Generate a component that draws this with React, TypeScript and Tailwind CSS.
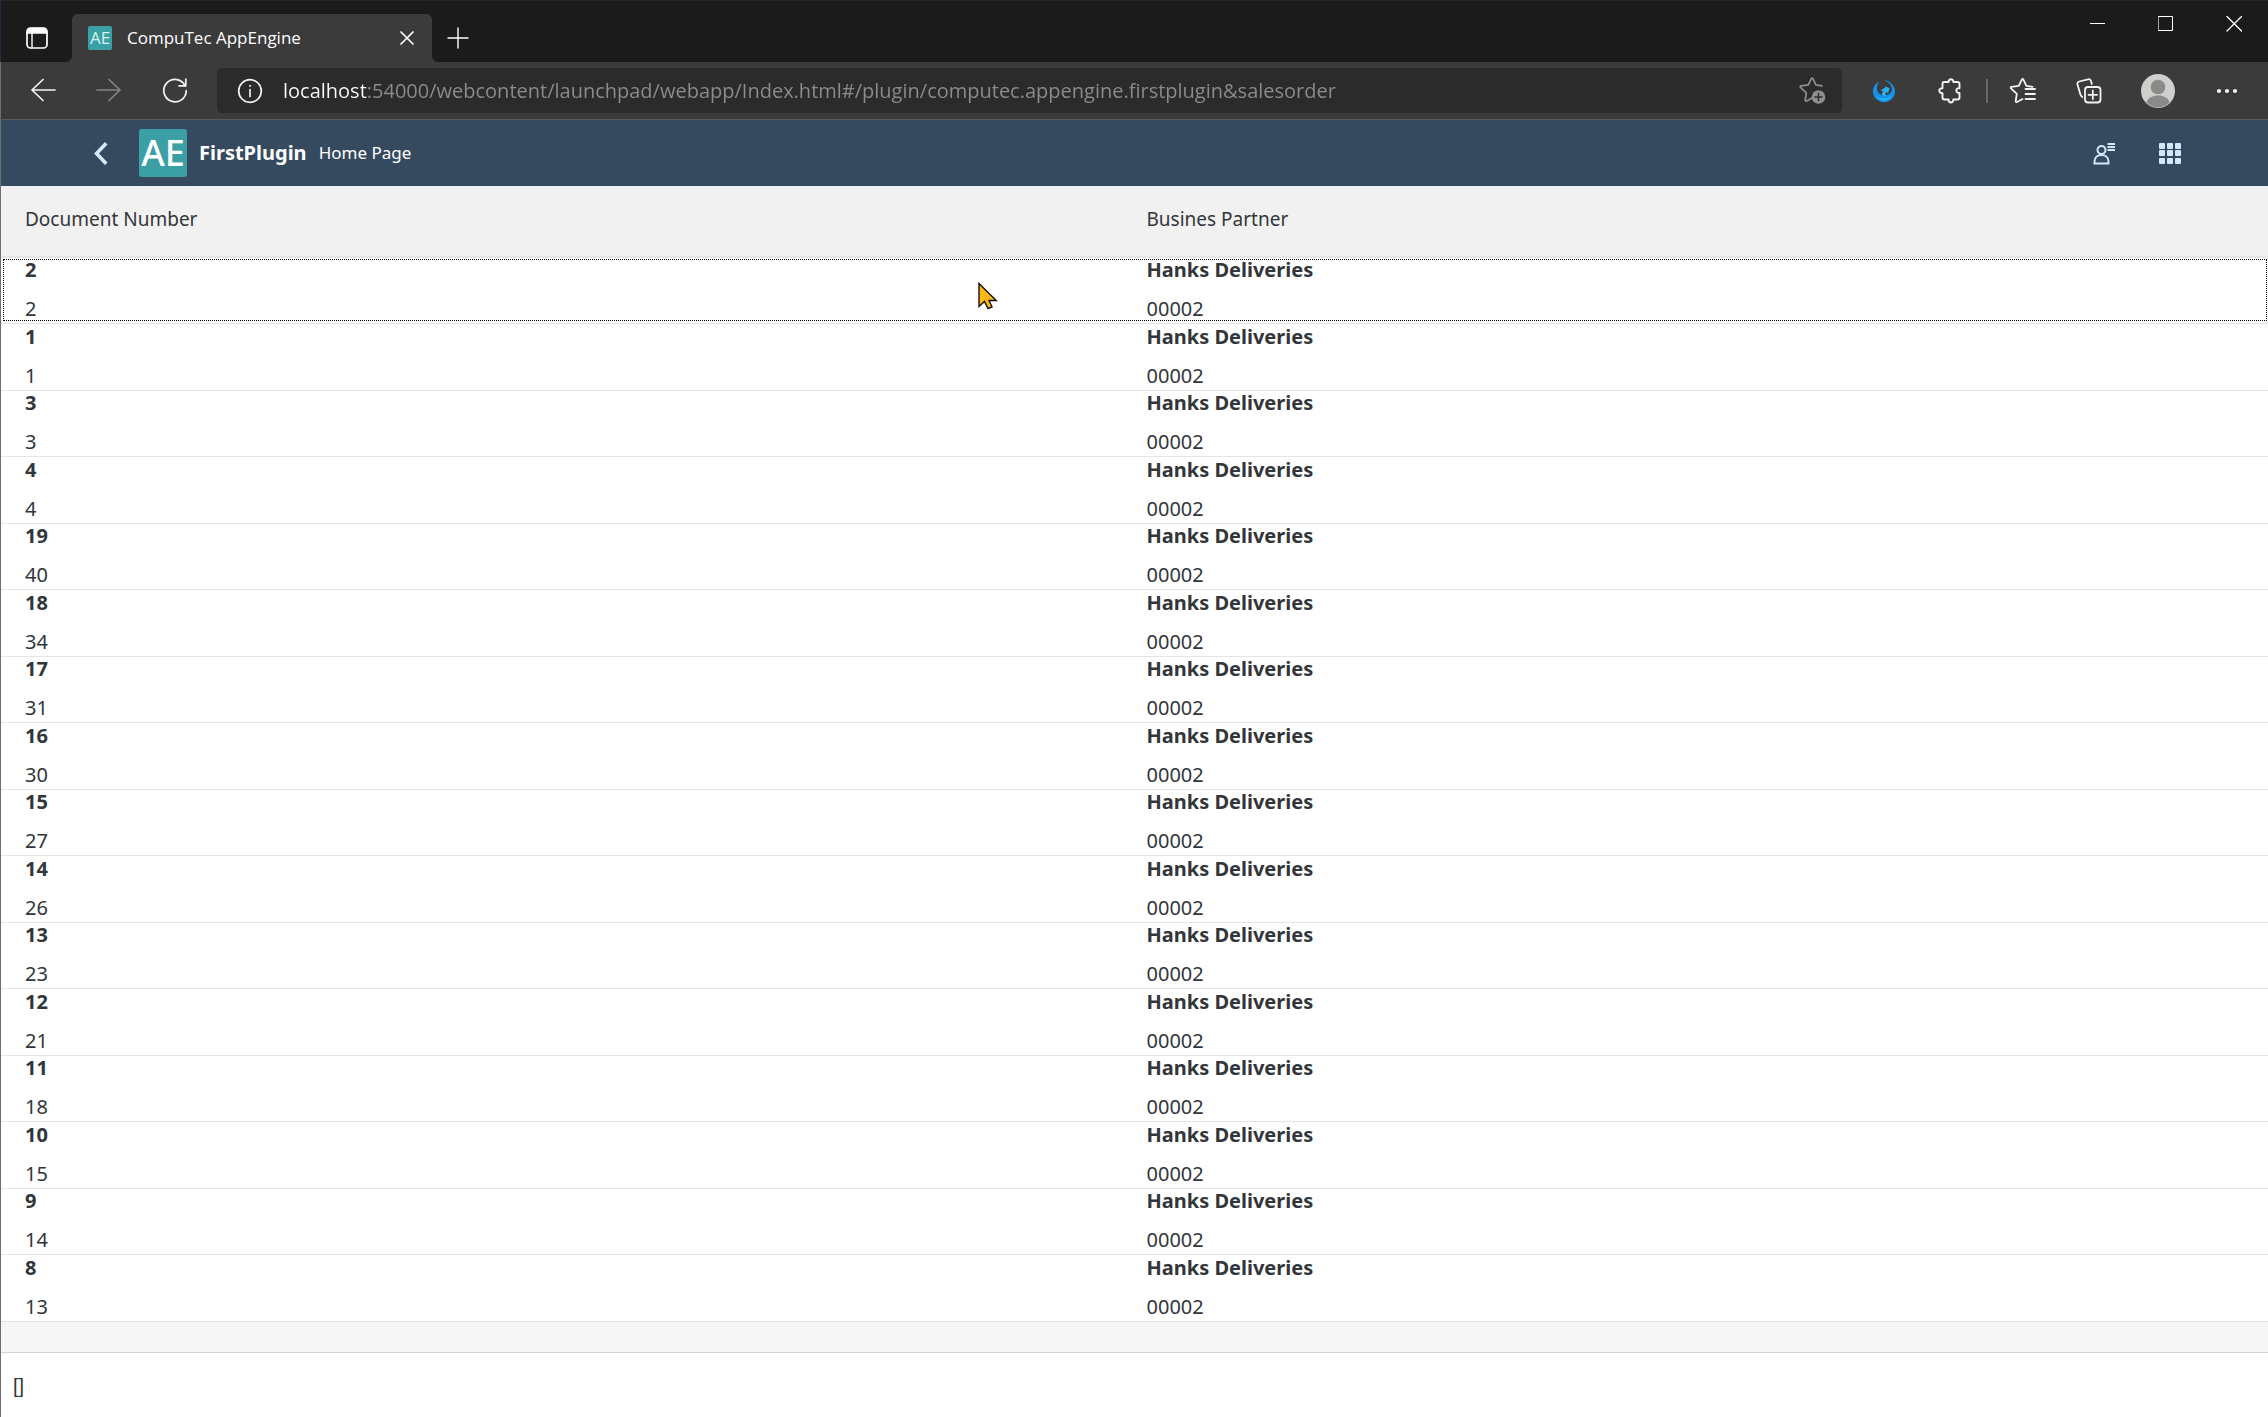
import React from 'react';

const rows: [string, string][] = [
  ['2', '2'], ['1', '1'], ['3', '3'], ['4', '4'], ['19', '40'], ['18', '34'], ['17', '31'], ['16', '30'],
  ['15', '27'], ['14', '26'], ['13', '23'], ['12', '21'], ['11', '18'], ['10', '15'], ['9', '14'], ['8', '13'],
];

const url =
  'localhost:54000/webcontent/launchpad/webapp/Index.html#/plugin/computec.appengine.firstplugin&salesorder';

const starPath = 'M18 25 L12.6 28 C11.9 28.4 11.1 27.8 11.2 27 L12.3 19.8 L6.5 14.4 C5.9 13.8 6.2 13 7 12.9 L14.3 11.9 L17.3 5.6 C17.7 4.8 18.5 4.8 18.9 5.6 L21.9 11.9 L28 12.8';

function Icon({ size = 24, stroke = 1.7, children }: { size?: number; stroke?: number; children: React.ReactNode }) {
  return (
    <svg width={size} height={size} viewBox={`0 0 ${size} ${size}`} fill="none" stroke="currentColor" strokeWidth={stroke} strokeLinecap="round" strokeLinejoin="round" aria-hidden="true">
      {children}
    </svg>
  );
}

function IconButton({ label, className, children }: { label: string; className: string; children: React.ReactNode }) {
  return (
    <button type="button" aria-label={label} className={`flex shrink-0 items-center justify-center ${className}`}>
      {children}
    </button>
  );
}

function TitleBar() {
  return (
    <div className="flex h-[62px] border-t border-l border-t-[#262626] border-l-[#1b3045] bg-[#1b1b1b] text-white">
      <IconButton label="Tab actions" className="w-[71px] pt-[12px]">
        <Icon>
          <rect x="2" y="2" width="20" height="20" rx="3.5" />
          <path d="M2.5 7V5.5a3 3 0 0 1 3-3h13a3 3 0 0 1 3 3V7z" fill="currentColor" />
          <path d="M7 7v15" strokeWidth="1.4" />
        </Icon>
      </IconButton>
      <div className="relative mt-[13px] flex w-[360px] items-center rounded-t-[6px] bg-[#3b3b3b] pr-[15px] pl-4">
        <svg className="absolute bottom-0 -left-[6px] text-[#3b3b3b]" width="6" height="6" aria-hidden="true"><path d="M6 0v6H0A6 6 0 0 0 6 0z" fill="currentColor" /></svg>
        <svg className="absolute -right-[6px] bottom-0 text-[#3b3b3b]" width="6" height="6" aria-hidden="true"><path d="M0 0v6h6A6 6 0 0 1 0 0z" fill="currentColor" /></svg>
        <span className="flex size-6 items-center justify-center rounded-[2px] bg-[#3aa0a5] text-[17px] leading-6 font-medium text-[#d8f2f2]">AE</span>
        <span className="ml-[15px] flex-1 text-[17px] leading-6">CompuTec AppEngine</span>
        <IconButton label="Close tab" className="size-5">
          <Icon size={20}><path d="M4 4l12 12M16 4L4 16" /></Icon>
        </IconButton>
      </div>
      <IconButton label="New tab" className="w-[51px] pt-[12px]">
        <Icon stroke={1.4}><path d="M12 2v20M2 12h20" /></Icon>
      </IconButton>
      <div className="ml-auto flex h-[45px]">
        <IconButton label="Minimize" className="w-[68px]">
          <Icon size={16} stroke={1}><path d="M0 7.5h15" strokeLinecap="butt" /></Icon>
        </IconButton>
        <IconButton label="Maximize" className="w-[68px]">
          <Icon size={16} stroke={1}><path d="M.5 .5h14v14h-14z" strokeLinejoin="miter" /></Icon>
        </IconButton>
        <IconButton label="Close window" className="w-[68px]">
          <Icon size={16} stroke={1.3}><path d="M1 .5l14.500 14.500M15.500 .5l-14.500 14.500" /></Icon>
        </IconButton>
      </div>
    </div>
  );
}

function Toolbar() {
  return (
    <div className="flex h-[58px] items-center border-b border-l border-b-[#5b5b5b] border-l-[#6f6f6f] bg-[#3b3b3b] text-[#f3f3f3]">
      <IconButton label="Back" className="ml-[9px] h-11 w-[66px]">
        <Icon size={26}><path d="M25 12H2M13 1.500L2 12l11 10.500" /></Icon>
      </IconButton>
      <IconButton label="Forward" className="h-11 w-[66px] text-[#858585]">
        <Icon size={26}><path d="M1 12h23M13 1.500L24 12 13 22.500" /></Icon>
      </IconButton>
      <IconButton label="Refresh" className="h-11 w-[66px]">
        <Icon size={26}>
          <path d="M23.200 8A11.200 11.200 0 1 0 24.200 12.500" />
          <path d="M23.800 1v6.800h-6.800" />
        </Icon>
      </IconButton>
      <div className="ml-[9px] flex h-[45px] flex-1 items-center rounded-[5px] bg-[#2b2b2b] pr-3 pl-5">
        <IconButton label="View site information" className="size-[26px]">
          <Icon size={26}>
            <circle cx="13" cy="13" r="11.300" />
            <path d="M13 11.500v7" />
            <circle cx="13" cy="7.800" r=".6" fill="currentColor" strokeWidth="1" />
          </Icon>
        </IconButton>
        <input
          aria-label="Address"
          defaultValue={url}
          className="ml-5 min-w-0 flex-1 bg-[linear-gradient(90deg,#ffffff_84px,#8c8c8c_84px)] bg-clip-text text-[20px] leading-7 text-transparent outline-none"
        />
        <IconButton label="Add to favorites" className="size-9 text-[#8f8f8f]">
          <Icon size={36}>
            <path d={starPath} />
            <circle cx="24.500" cy="24" r="6.800" fill="currentColor" stroke="none" />
            <path d="M24.500 20.500v7M21 24h7" stroke="#2b2b2b" strokeWidth="1.500" />
          </Icon>
        </IconButton>
      </div>
      <IconButton label="Browser extension" className="ml-[18px] size-12">
        <svg width="24" height="24" viewBox="0 0 24 24" aria-hidden="true">
          <path d="M7 2.500C3.600 4.400 1 8 1 12.500a11 10.700 0 0 0 22 0C23 7 18.500 2.600 12.500.5c3 3 7 4.500 7.400 9 .2 2.500-1.200 4.700-3.400 5.800-5.500 2.500-11.500.2-11.500-5.800 0-3 1-5 2-7z" fill="#1590e8" />
          <path d="M8.500 12.200c1-2 3.200-3 5-3.200L12.500 7l5 2.200-1.500 5.300-1.500-2c-1.200 1.500-1.500 3.500-.5 4.500-3 .5-4.500-.8-4.300-2.200.1-1 1.500-1.300 2-2.200-1-.8-2-.7-3.200-.4z" fill="#27b4f5" />
          <path d="M4 17c4 3.500 11 3.500 16-.5-2.500 6-12.500 7-16 .5z" fill="#27b4f5" />
        </svg>
      </IconButton>
      <IconButton label="Extensions" className="ml-[18px] size-12">
        <Icon size={26} stroke={1.9}>
          <path transform="translate(1 -.5)" d="M6 4.500h4.600c-.3-3.600 5-3.600 4.800 0h4.100a2 2 0 0 1 2 2v4.200c-4.200-.5-4.200 5.200 0 4.800v4.500a2 2 0 0 1-2 2h-4.200c.2 4-5 4-4.700 0H6.500a2 2 0 0 1-2-2v-4.300c-4.300.3-4.300-5.200 0-4.900V6a1.500 1.500 0 0 1 1.500-1.500z" />
        </Icon>
      </IconButton>
      <div className="ml-3 h-6 w-[2px] shrink-0 bg-[#686868]" />
      <IconButton label="Favorites" className="ml-[11px] size-12">
        <Icon size={36} stroke={1.8}>
          <path d={starPath} transform="translate(-.5 1)" />
          <path d="M20.500 16h9.500M20.500 21h9.500M20.500 26h9.500" />
        </Icon>
      </IconButton>
      <IconButton label="Collections" className="ml-[18px] size-12">
        <Icon size={26} stroke={1.8}>
          <rect x="9" y="9" width="15.500" height="15.500" rx="3" />
          <path d="M16.800 12.500v8.500M12.500 16.800h8.500" />
          <path d="M6.200 19C4.600 18 4.300 16.500 3.900 14.800L1.500 6.500c-.4-1.500.2-2.600 1.700-3L12 1.300c1.500-.4 2.600.3 3 1.700l.8 3" />
        </Icon>
      </IconButton>
      <IconButton label="Profile" className="ml-[21px] size-12">
        <svg width="34" height="34" viewBox="0 0 34 34" aria-hidden="true">
          <circle cx="17" cy="17" r="17" fill="#d0cfcd" />
          <circle cx="17" cy="13" r="7.300" fill="#8a8a88" />
          <path d="M5.500 28.500C7 23.500 11.500 21.500 17 21.500s10 2 11.500 7C25 32 21 33.500 17 33.500s-8-1.500-11.500-5z" fill="#8a8a88" />
        </svg>
      </IconButton>
      <IconButton label="Settings and more" className="mr-[17px] ml-[21px] size-12">
        <svg width="22" height="6" fill="currentColor" aria-hidden="true"><circle cx="3" cy="3" r="2.100" /><circle cx="11" cy="3" r="2.100" /><circle cx="19" cy="3" r="2.100" /></svg>
      </IconButton>
    </div>
  );
}

function ShellHeader() {
  return (
    <header className="flex h-[66px] items-center bg-[#354a5f] text-white">
      <IconButton label="Back" className="ml-[75px] size-12 text-[#d1e8ff]">
        <Icon size={24} stroke={3.6}><path d="M17 3.500L8.500 12.500l8.500 9" strokeLinecap="square" strokeLinejoin="miter" /></Icon>
      </IconButton>
      <a href="#home" className="ml-[15px] flex size-12 items-center justify-center rounded-[3px] bg-[#3aa0a5] text-[36px] leading-[48px] font-medium text-white">AE</a>
      <h1 className="ml-3 text-[20px] leading-7 font-bold">FirstPlugin</h1>
      <span className="ml-3 text-[17px] leading-7">Home Page</span>
      <div className="mr-[74px] ml-auto flex gap-[18px] text-[#d1e8ff]">
        <IconButton label="User" className="size-12">
          <svg width="24" height="24" viewBox="0 0 24 24" fill="none" stroke="currentColor" strokeWidth="2" aria-hidden="true">
            <circle cx="9.500" cy="9" r="4" />
            <path d="M2.500 22.500v-2c0-4 3-6.500 7-6.500s7 2.500 7 6.500v2z" />
            <path d="M15.500 3H23M15.500 6H23M15.500 9H23" />
          </svg>
        </IconButton>
        <IconButton label="Products" className="size-12">
          <svg width="24" height="24" viewBox="0 0 24 24" fill="currentColor" aria-hidden="true">
            {[1, 9, 17].map((x) => [2, 9, 17].map((y) => <rect key={`${x}-${y}`} x={x} y={y} width="6" height="6" rx="1" />))}
          </svg>
        </IconButton>
      </div>
    </header>
  );
}

function Pointer() {
  return (
    <svg className="absolute top-[24px] left-[977px]" width="20" height="28" viewBox="0 0 20 28" aria-hidden="true">
      <path d="M1 1.500V24.500L6.500 19.500L10 26.500L14 24.800L11 18.500H18.200z" fill="#fdb913" stroke="#111" strokeWidth="1.400" />
    </svg>
  );
}

function OrdersTable() {
  return (
    <table className="w-full table-fixed border-separate border-spacing-0 text-left text-[#32363a]">
      <thead>
        <tr className="h-[72px] bg-[#f1f1f1] text-[19px] leading-6">
          <th scope="col" className="w-1/2 border-b-2 border-[#e6e6e6] p-0 pb-1 pl-6 font-normal">Document Number</th>
          <th scope="col" className="w-1/2 border-b-2 border-[#e6e6e6] p-0 pb-1 pl-3 font-normal">Busines Partner</th>
        </tr>
      </thead>
      <tbody className="bg-white text-[20px] leading-6">
        {rows.map(([entry, num], i) => (
          <tr key={entry} className="group relative h-[67px] odd:h-[66px]">
            <td className="border-b border-[#e5e5e5] p-0 pl-6 align-top group-even:pt-px">
              <div className="font-bold">{entry}</div>
              <div className="mt-[15px]">{num}</div>
              {i === 0 && (
                <>
                  <span className="absolute top-px right-px bottom-[3px] left-[2px] border border-dotted border-black" />
                  <Pointer />
                </>
              )}
            </td>
            <td className="border-b border-[#e5e5e5] p-0 pl-3 align-top group-even:pt-px">
              <div className="font-bold">Hanks Deliveries</div>
              <div className="mt-[15px]">00002</div>
            </td>
          </tr>
        ))}
      </tbody>
    </table>
  );
}

export default function App() {
  return (
    <div className="flex min-h-screen flex-col bg-white font-['Open_Sans',sans-serif]">
      <TitleBar />
      <Toolbar />
      <div className="flex flex-1 flex-col border-l border-[#6f6f6f] font-['Noto_Sans',sans-serif]">
        <ShellHeader />
        <main>
          <OrdersTable />
          <div className="h-[31px] border-b border-[#d4d4d4] bg-[#f6f6f6]" />
        </main>
        <footer className="px-3 py-[22px] font-['Liberation_Sans',sans-serif] text-[20px] leading-[22px] text-[#32363a]">[]</footer>
      </div>
    </div>
  );
}
